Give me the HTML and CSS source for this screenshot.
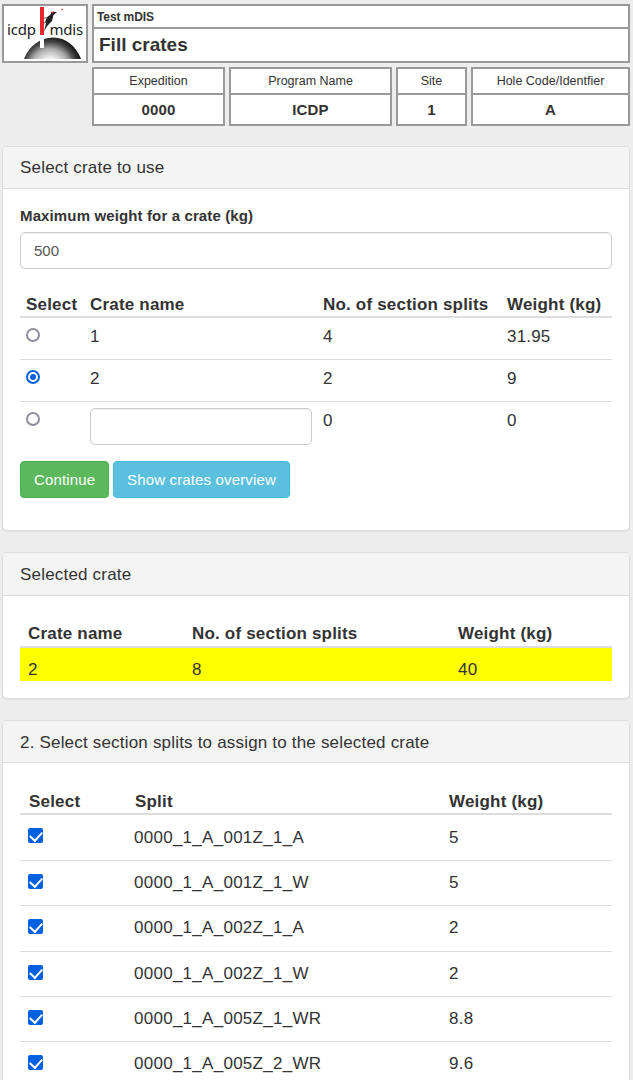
FILE: index.html
```html
<!DOCTYPE html>
<html lang="en">
<head>
  <meta charset="UTF-8" />
  <meta name="viewport" content="width=device-width, initial-scale=1.0"/>
  <title>Fill crates</title>
  <link rel="stylesheet" href="styles.css">
</head>

<body>
  <header class="report-header">
    <div class="logo">
      <svg width="82" height="55" viewBox="0 0 82 55">
        <defs>
          <radialGradient id="dome" gradientUnits="userSpaceOnUse" cx="46" cy="62" r="32">
            <stop offset="0.25" stop-color="#fff"/>
            <stop offset="0.6" stop-color="#aaa"/>
            <stop offset="0.82" stop-color="#444"/>
            <stop offset="1" stop-color="#111"/>
          </radialGradient>
        </defs>
        <path d="M20 53 C25 40 36 31.5 49 31.5 C62 31.5 72 40 77 53 Z" fill="url(#dome)"/>
        <rect x="36" y="29" width="4" height="13" fill="#fff"/>
        <rect x="36" y="1" width="4" height="28" fill="#e8242c"/>
        <path d="M53 6 L48 6 L46 9 L43 11 L41 16 L42 17 L40 26 L42.5 21 L45 18 L48 15 L49.5 9 Z" fill="#222"/>
        <path d="M40 12 L44 12 M40 17 L43 16" stroke="#555" stroke-width="1"/>
        <path d="M46 6 L50 5.5 L49 7.5 Z" fill="#e8242c"/>
        <path d="M57 4 L59 3" stroke="#e8242c" stroke-width="1"/>
        <text class="logo-text" x="3" y="28.5">icdp</text>
        <text class="logo-text" x="45.5" y="28.5">mdis</text>
      </svg>
    </div>
    <div class="header-main">
      <div class="title-box">
        <div class="app-name">Test mDIS</div>
        <h1>Fill crates</h1>
      </div>
      <div class="info-row">
        <div class="info-box"><span>Expedition</span><strong>0000</strong></div>
        <div class="info-box"><span>Program Name</span><strong>ICDP</strong></div>
        <div class="info-box"><span>Site</span><strong>1</strong></div>
        <div class="info-box"><span>Hole Code/Identfier</span><strong>A</strong></div>
      </div>
    </div>
  </header>

  <section class="panel panel-crates">
    <div class="panel-heading">Select crate to use</div>
    <div class="panel-body">
      <label for="maxWeight">Maximum weight for a crate (kg)</label>
      <input type="text" id="maxWeight" class="form-control" value="500" />
      <table class="crates">
        <colgroup><col class="c1"><col class="c2"><col class="c3"><col></colgroup>
        <thead>
          <tr><th>Select</th><th>Crate name</th><th>No. of section splits</th><th>Weight (kg)</th></tr>
        </thead>
        <tbody>
          <tr><td><input type="radio" name="crate"></td><td>1</td><td>4</td><td>31.95</td></tr>
          <tr><td><input type="radio" name="crate" checked></td><td>2</td><td>2</td><td>9</td></tr>
          <tr><td><input type="radio" name="crate"></td><td class="new-crate"><input type="text" class="form-control"></td><td>0</td><td>0</td></tr>
        </tbody>
      </table>
      <div class="buttons">
        <button class="btn btn-success">Continue</button>
        <button class="btn btn-info">Show crates overview</button>
      </div>
    </div>
  </section>

  <section class="panel panel-selected">
    <div class="panel-heading">Selected crate</div>
    <div class="panel-body">
      <table class="selected">
        <colgroup><col class="c1"><col class="c2"><col></colgroup>
        <thead>
          <tr><th>Crate name</th><th>No. of section splits</th><th>Weight (kg)</th></tr>
        </thead>
        <tbody>
          <tr><td>2</td><td>8</td><td>40</td></tr>
        </tbody>
      </table>
    </div>
  </section>

  <section class="panel panel-splits">
    <div class="panel-heading">2. Select section splits to assign to the selected crate</div>
    <div class="panel-body">
      <table class="splits">
        <colgroup><col class="c1"><col class="c2"><col></colgroup>
        <thead>
          <tr><th>Select</th><th>Split</th><th>Weight (kg)</th></tr>
        </thead>
        <tbody>
          <tr><td><input type="checkbox" checked></td><td>0000_1_A_001Z_1_A</td><td>5</td></tr>
          <tr><td><input type="checkbox" checked></td><td>0000_1_A_001Z_1_W</td><td>5</td></tr>
          <tr><td><input type="checkbox" checked></td><td>0000_1_A_002Z_1_A</td><td>2</td></tr>
          <tr><td><input type="checkbox" checked></td><td>0000_1_A_002Z_1_W</td><td>2</td></tr>
          <tr><td><input type="checkbox" checked></td><td>0000_1_A_005Z_1_WR</td><td>8.8</td></tr>
          <tr><td><input type="checkbox" checked></td><td>0000_1_A_005Z_2_WR</td><td>9.6</td></tr>
        </tbody>
      </table>
    </div>
  </section>
</body>
</html>
```
FILE: styles.css
```css
* { box-sizing: border-box; margin: 0; padding: 0; }
html { overflow: hidden; }
body {
  font-family: "Liberation Sans", Arial, sans-serif;
  font-size: 17px; line-height: 24px; letter-spacing: 0.19px;
  background: #ededed; color: #333;
  padding: 4px 3px 0 2px;
}

/* report header */
.report-header { display: flex; gap: 4px; align-items: flex-start; margin-bottom: 20px; }
.logo { width: 86px; height: 59px; background: #fff; border: 2px solid #999; }
.logo svg { display: block; }
.logo-text { font-family: "Noto Sans", sans-serif; font-size: 15px; letter-spacing: -0.2px; fill: #222; }
.header-main { flex: 1; }
.title-box { height: 59px; border: 2px solid #999; background: #fff; margin-bottom: 4px; }
.app-name {
  height: 23px; line-height: 22px; padding-left: 3px;
  font-size: 12px; font-weight: bold; letter-spacing: -0.1px;
  border-bottom: 2px solid #999;
}
h1 { font-size: 19px; line-height: 32px; padding-left: 5px; letter-spacing: 0; }
.info-row { display: grid; grid-template-columns: 133px 163px 71px 159px; gap: 4px; }
.info-box { height: 59px; border: 2px solid #999; background: #fff; text-align: center; }
.info-box span {
  display: block; height: 26px; line-height: 24px;
  font-size: 12.5px; letter-spacing: 0;
  border-bottom: 2px solid #999;
}
.info-box strong { display: block; font-size: 15px; line-height: 29px; }

/* panels */
.panel {
  background: #fff; border: 1px solid #ddd; border-radius: 5px;
  box-shadow: 0 1px 1px rgba(0,0,0,0.05); margin-bottom: 21px;
}
.panel-heading {
  height: 42px; line-height: 41px; padding-left: 17px;
  background: #f4f4f4; border-bottom: 1px solid #ddd; border-radius: 4px 4px 0 0;
}
.panel-body { padding: 0 17px; }
.panel-crates { height: 385px; }
.panel-selected { height: 147px; }
.panel-selected .panel-heading { height: 43px; line-height: 43px; }
.panel-splits .panel-heading { line-height: 43px; }

label { display: block; font-size: 15px; font-weight: bold; letter-spacing: 0.13px; padding-top: 15px; margin-bottom: 4px; }
.form-control {
  display: block; width: 100%; height: 37px; padding: 0 13px;
  font-family: inherit; font-size: 15px; color: #555;
  background: #fff; border: 1px solid #ccc; border-radius: 5px;
  box-shadow: inset 0 1px 1px rgba(0,0,0,0.075); outline: none;
}

/* tables */
table { width: 100%; table-layout: fixed; border-collapse: separate; border-spacing: 0; }
th { text-align: left; vertical-align: bottom; border-bottom: 2px solid #ddd; white-space: nowrap; }
td { vertical-align: top; border-bottom: 1px solid #ddd; }
tbody tr:last-child td { border-bottom: none; }

.crates { margin-top: 22px; }
.crates .c1 { width: 64px; }
.crates .c2 { width: 233px; }
.crates .c3 { width: 184px; }
.crates th { height: 27px; padding-left: 6px; line-height: 22px; }
.crates td { height: 42px; padding: 7px 0 0 6px; }
.crates td.new-crate { padding: 6px 5px 0 6px; }
.crates tbody tr:last-child td { height: 59px; }

.buttons { display: flex; gap: 4px; }
.btn {
  height: 37px; padding: 0 13px; border: 1px solid; border-radius: 4px;
  font-family: inherit; font-size: 15px; letter-spacing: 0.15px; color: #fff; white-space: nowrap;
}
.btn-success { width: 89px; background: #5cb85c; border-color: #4cae4c; }
.btn-info { width: 177px; background: #5bc0de; border-color: #46b8da; }

.selected { margin-top: 25px; }
.selected .c1 { width: 164px; }
.selected .c2 { width: 266px; }
.selected th { height: 27px; padding-left: 8px; }
.selected td { height: 33px; line-height: 22px; padding: 11px 0 0 8px; background: #ff0; }

.splits { margin-top: 25px; letter-spacing: 0.27px; }
.splits .c1 { width: 106px; }
.splits .c2 { width: 315px; }
.splits th { height: 27px; padding-left: 9px; line-height: 22px; letter-spacing: 0.19px; }
.splits th:last-child { padding-left: 8px; }
.splits td { height: 45.3px; padding: 10px 0 0 8px; }
.splits tbody tr:first-child td { height: 46px; padding-top: 11px; }
.splits tbody tr:first-child input { margin-top: 2px; }

/* radio buttons and checkboxes */
input[type="radio"] {
  appearance: none; display: block; width: 14px; height: 14px; margin-top: 3px;
  border: 2px solid #8f8f9d; border-radius: 50%;
}
input[type="radio"]:checked {
  border-color: #0060df;
  background: radial-gradient(circle, #0060df 2.7px, #fff 3.4px);
}
input[type="checkbox"] {
  appearance: none; display: block; width: 15px; height: 15px; margin-top: 3px;
  background: #0060df; border-radius: 2px;
}
input[type="checkbox"]::after {
  content: ""; display: block; width: 10px; height: 6px; margin: 0 auto;
  border: solid #fff; border-width: 0 0 2px 2px;
  transform: translateY(3px) rotate(-48deg);
}
```
